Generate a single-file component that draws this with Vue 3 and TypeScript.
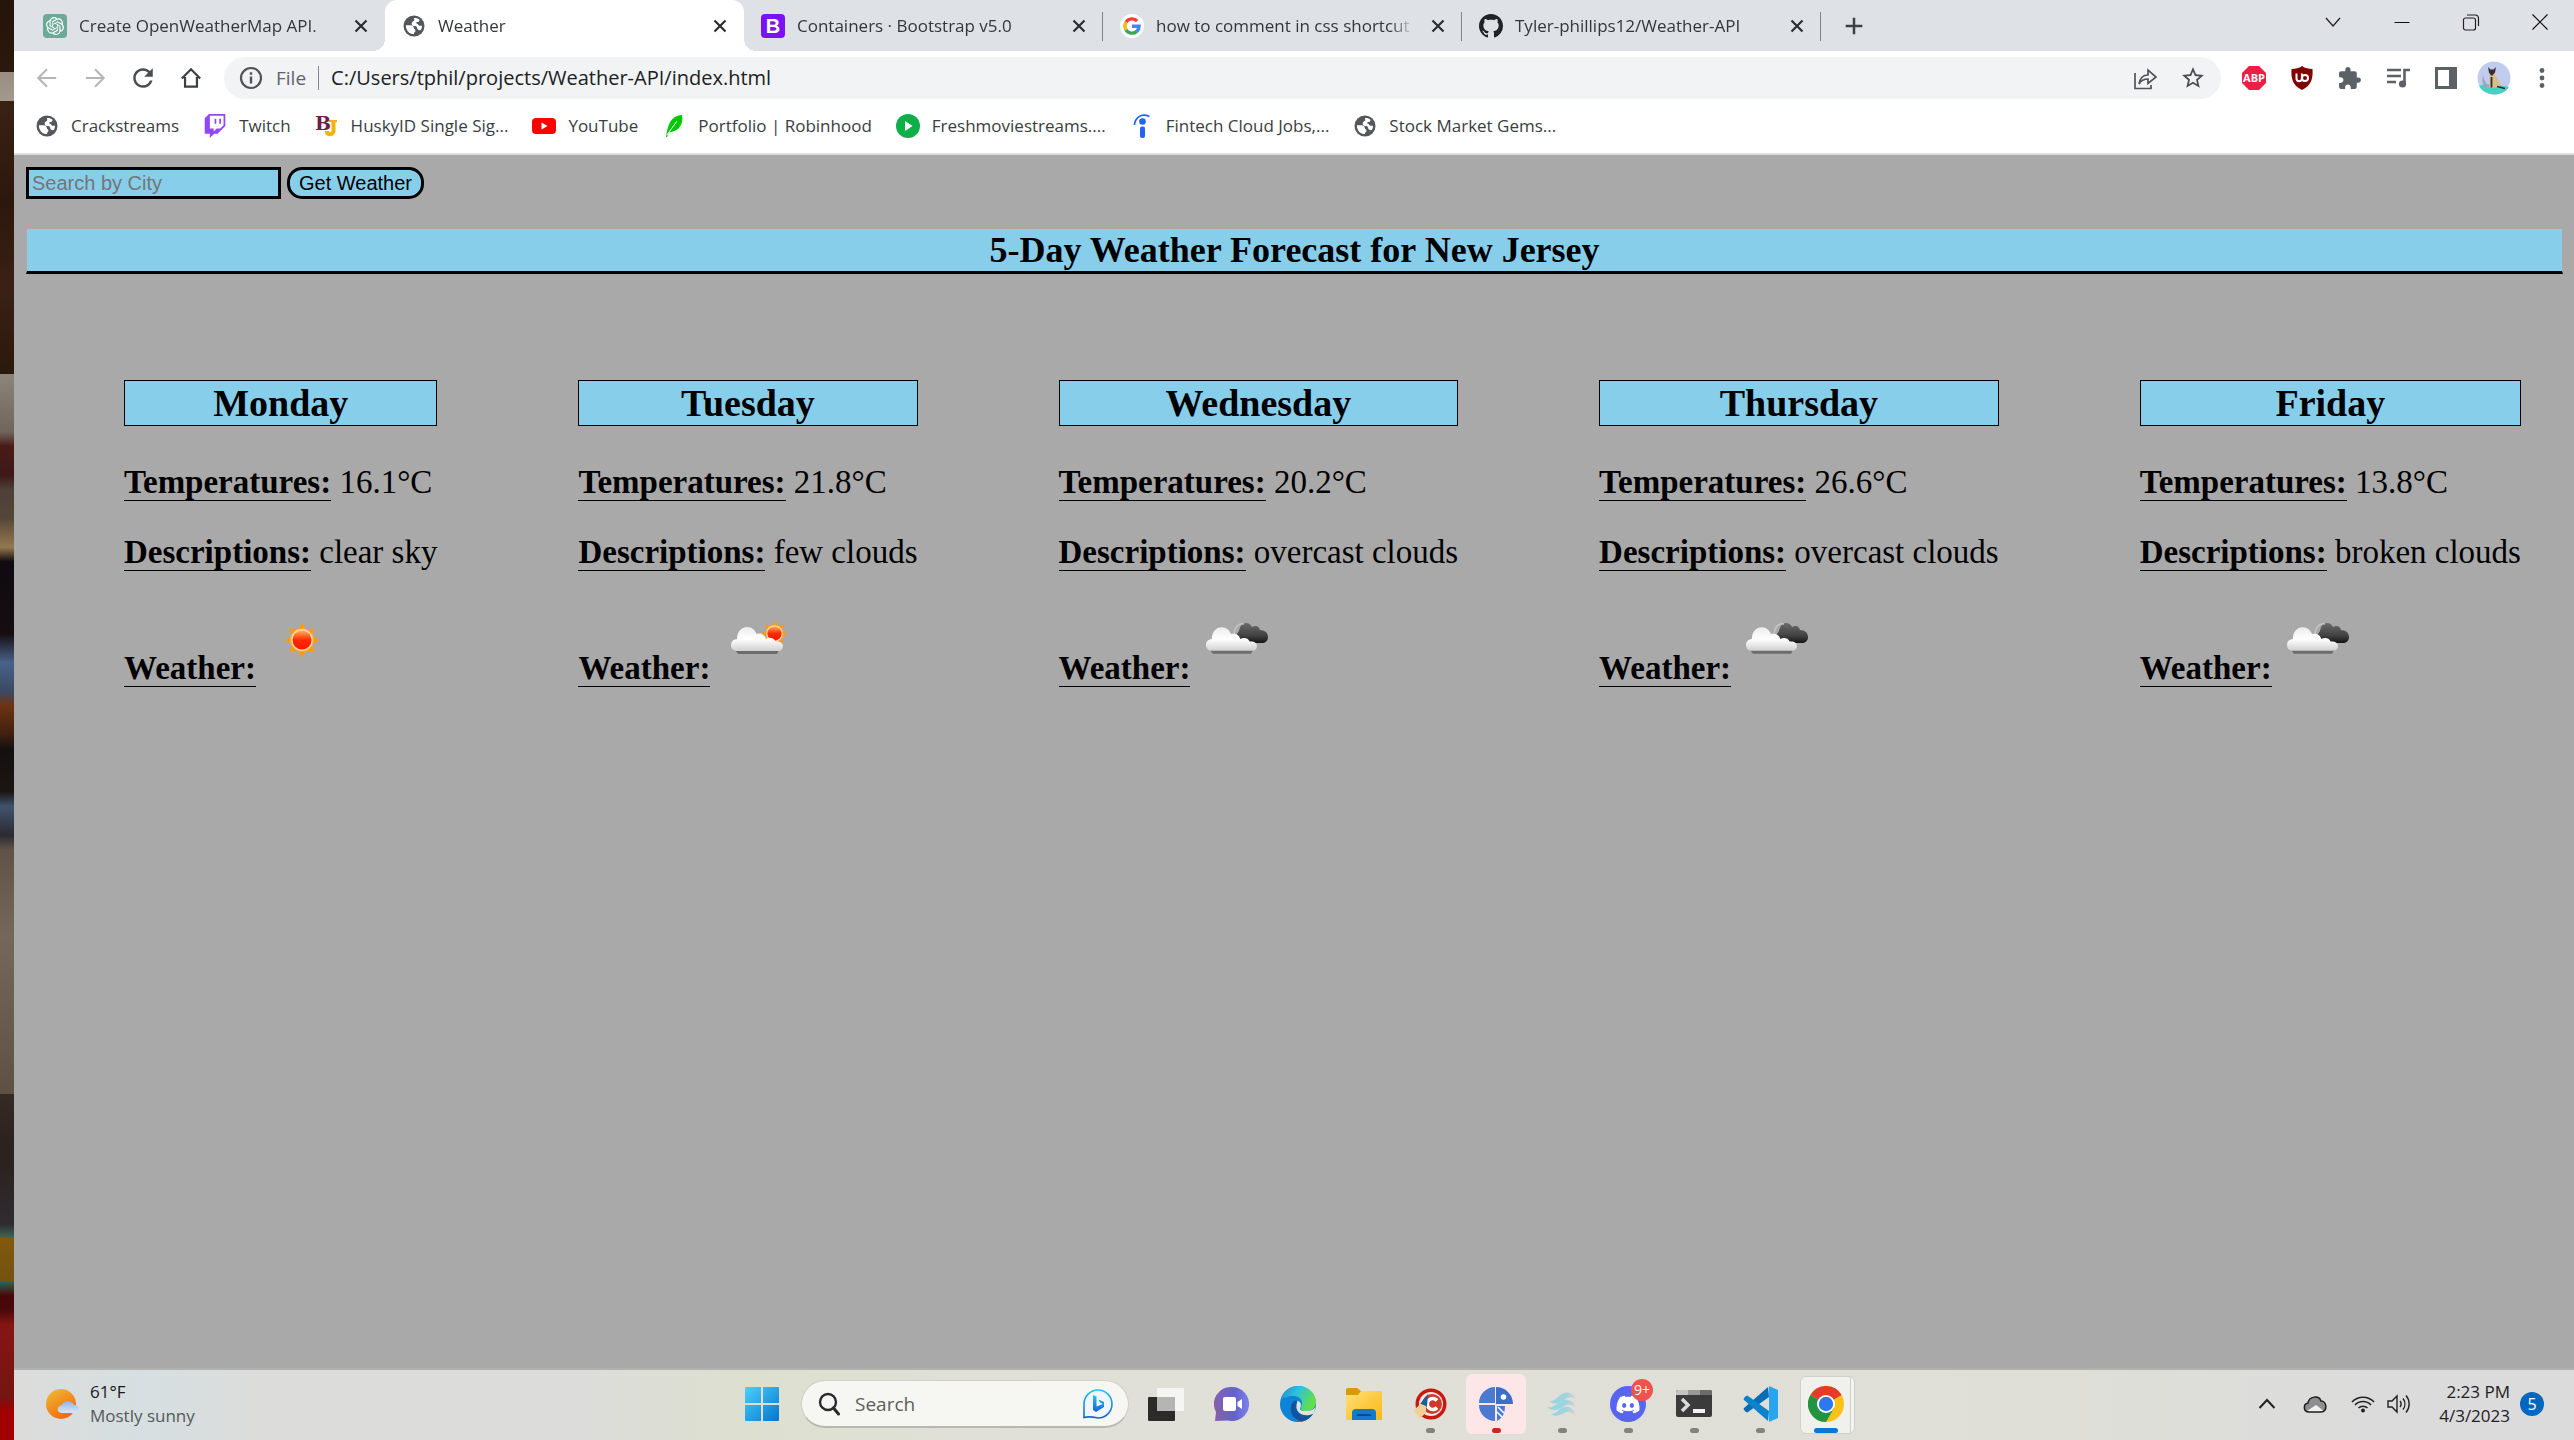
<script setup lang="ts">
import { ref } from 'vue'

interface Tab { icon: string; title: string; active?: boolean; divider?: boolean }
interface Bookmark { icon: string; label: string }
interface Day { name: string; temp: string; description: string; icon: string }
interface TaskApp { icon: string; label: string; running?: boolean; state?: 'alert' | 'open'; badge?: string }

const tabs: Tab[] = [
  { icon: 'chatgpt', title: 'Create OpenWeatherMap API.' },
  { icon: 'globe', title: 'Weather', active: true },
  { icon: 'bootstrap', title: 'Containers · Bootstrap v5.0', divider: true },
  { icon: 'google', title: 'how to comment in css shortcut - Google Search', divider: true },
  { icon: 'github', title: 'Tyler-phillips12/Weather-API', divider: true },
]

const bookmarks: Bookmark[] = [
  { icon: 'globe', label: 'Crackstreams' },
  { icon: 'twitch', label: 'Twitch' },
  { icon: 'husky', label: 'HuskyID Single Sig...' },
  { icon: 'youtube', label: 'YouTube' },
  { icon: 'feather', label: 'Portfolio | Robinhood' },
  { icon: 'play', label: 'Freshmoviestreams....' },
  { icon: 'indeed', label: 'Fintech Cloud Jobs,...' },
  { icon: 'globe', label: 'Stock Market Gems...' },
]

const extensions = [
  { icon: 'abp', label: 'Adblock Plus' },
  { icon: 'ublock', label: 'uBlock Origin' },
  { icon: 'puzzle', label: 'Extensions' },
  { icon: 'queue', label: 'Media controls' },
  { icon: 'panel', label: 'Side panel' },
  { icon: 'avatar', label: 'Profile' },
  { icon: 'dots', label: 'Menu' },
]

const windowControls = [
  { icon: 'win-down', label: 'Search tabs' },
  { icon: 'win-min', label: 'Minimize' },
  { icon: 'win-restore', label: 'Restore' },
  { icon: 'win-close', label: 'Close' },
]

const navButtons = [
  { icon: 'back', label: 'Back' },
  { icon: 'forward', label: 'Forward' },
  { icon: 'reload', label: 'Reload' },
  { icon: 'home', label: 'Home' },
]

const days: Day[] = [
  { name: 'Monday', temp: '16.1°C', description: 'clear sky', icon: 'sky-clear' },
  { name: 'Tuesday', temp: '21.8°C', description: 'few clouds', icon: 'sky-few' },
  { name: 'Wednesday', temp: '20.2°C', description: 'overcast clouds', icon: 'sky-overcast' },
  { name: 'Thursday', temp: '26.6°C', description: 'overcast clouds', icon: 'sky-overcast' },
  { name: 'Friday', temp: '13.8°C', description: 'broken clouds', icon: 'sky-overcast' },
]

const apps: TaskApp[] = [
  { icon: 'taskview', label: 'Task view' },
  { icon: 'chat', label: 'Chat' },
  { icon: 'edge', label: 'Edge' },
  { icon: 'explorer', label: 'File Explorer' },
  { icon: 'ccleaner', label: 'CCleaner', running: true },
  { icon: 'pie', label: 'Partition tool', running: true, state: 'alert' },
  { icon: 'wing', label: 'Wing', running: true },
  { icon: 'discord', label: 'Discord', running: true, badge: '9+' },
  { icon: 'terminal', label: 'Terminal', running: true },
  { icon: 'vscode', label: 'Visual Studio Code', running: true },
  { icon: 'chrome', label: 'Chrome', running: true, state: 'open' },
]

const url = ref('C:/Users/tphil/projects/Weather-API/index.html')
const city = ref('')
const query = ref('')
</script>

<template>
  <div class="desktop">
    <svg class="sprite" aria-hidden="true">
      <defs>
        <linearGradient id="g-sun" x1="0" y1="0" x2="0" y2="1">
          <stop offset="0" stop-color="#ffb060" /><stop offset=".5" stop-color="#ff2a00" /><stop offset="1" stop-color="#ff1400" />
        </linearGradient>
        <linearGradient id="g-cloud" x1="0" y1="0" x2="0" y2="1">
          <stop offset="0" stop-color="#ececec" /><stop offset=".5" stop-color="#ffffff" /><stop offset="1" stop-color="#d0d0d0" />
        </linearGradient>
        <linearGradient id="g-dark" x1="0" y1="0" x2="0" y2="1">
          <stop offset="0" stop-color="#6a6a6a" /><stop offset=".6" stop-color="#444" /><stop offset="1" stop-color="#151515" />
        </linearGradient>
        <linearGradient id="g-win" gradientUnits="userSpaceOnUse" x1="0" y1="0" x2="36" y2="36">
          <stop offset="0" stop-color="#4fd3fb" /><stop offset="1" stop-color="#0072d0" />
        </linearGradient>
        <linearGradient id="g-warm" x1="0" y1="0" x2=".6" y2="1">
          <stop offset="0" stop-color="#f0bf35" /><stop offset="1" stop-color="#f2690c" />
        </linearGradient>
        <linearGradient id="g-mini" x1="0" y1="0" x2="0" y2="1">
          <stop offset="0" stop-color="#8fb4ee" /><stop offset="1" stop-color="#dbe6fb" />
        </linearGradient>
        <linearGradient id="g-bing" x1="0" y1="0" x2="0" y2="1">
          <stop offset="0" stop-color="#21c3f3" /><stop offset="1" stop-color="#1c5fdc" />
        </linearGradient>
        <linearGradient id="g-chat" x1="0" y1=".3" x2="1" y2=".3">
          <stop offset="0" stop-color="#8660a8" /><stop offset=".6" stop-color="#6264cc" /><stop offset="1" stop-color="#7b83ea" />
        </linearGradient>
        <linearGradient id="g-edge" x1="0" y1="0" x2="1" y2=".4">
          <stop offset="0" stop-color="#1a8fdc" /><stop offset=".5" stop-color="#31c2d8" /><stop offset="1" stop-color="#62e04a" />
        </linearGradient>
        <linearGradient id="g-folder" x1="0" y1="0" x2="1" y2="1">
          <stop offset="0" stop-color="#ffe07a" /><stop offset="1" stop-color="#fab70e" />
        </linearGradient>
        <linearGradient id="g-wing" gradientUnits="userSpaceOnUse" x1="3" y1="0" x2="33" y2="0">
          <stop offset="0" stop-color="#93d6e4" /><stop offset=".6" stop-color="#9fd4df" /><stop offset="1" stop-color="#dccfd3" />
        </linearGradient>
      </defs>

      <!-- tab and bookmark icons -->
      <symbol id="chatgpt" viewBox="0 0 24 24">
        <rect width="24" height="24" rx="4" fill="#6ea896" />
        <path transform="translate(3 3) scale(.75)" fill="#fff" d="M22.2819 9.8211a5.9847 5.9847 0 0 0-.5157-4.9108 6.0462 6.0462 0 0 0-6.5098-2.9A6.0651 6.0651 0 0 0 4.9807 4.1818a5.9847 5.9847 0 0 0-3.9977 2.9 6.0462 6.0462 0 0 0 .7427 7.0966 5.98 5.98 0 0 0 .511 4.9107 6.051 6.051 0 0 0 6.5146 2.9001A5.9847 5.9847 0 0 0 13.2599 24a6.0557 6.0557 0 0 0 5.7718-4.2058 5.9894 5.9894 0 0 0 3.9977-2.9001 6.0557 6.0557 0 0 0-.7475-7.0729zm-9.022 12.6081a4.4755 4.4755 0 0 1-2.8764-1.0408l.1419-.0804 4.7783-2.7582a.7948.7948 0 0 0 .3927-.6813v-6.7369l2.02 1.1686a.071.071 0 0 1 .038.052v5.5826a4.504 4.504 0 0 1-4.4945 4.4944zm-9.6607-4.1254a4.4708 4.4708 0 0 1-.5346-3.0137l.142.0852 4.783 2.7582a.7712.7712 0 0 0 .7806 0l5.8428-3.3685v2.3324a.0804.0804 0 0 1-.0332.0615L9.74 19.9502a4.4992 4.4992 0 0 1-6.1408-1.6464zM2.3408 7.8956a4.485 4.485 0 0 1 2.3655-1.9728V11.6a.7664.7664 0 0 0 .3879.6765l5.8144 3.3543-2.0201 1.1685a.0757.0757 0 0 1-.071 0l-4.8303-2.7865A4.504 4.504 0 0 1 2.3408 7.872zm16.5963 3.8558L13.1038 8.364 15.1192 7.2a.0757.0757 0 0 1 .071 0l4.8303 2.7913a4.4944 4.4944 0 0 1-.6765 8.1042v-5.6772a.79.79 0 0 0-.407-.667zm2.0107-3.0231l-.142-.0852-4.7735-2.7818a.7759.7759 0 0 0-.7854 0L9.409 9.2297V6.8974a.0662.0662 0 0 1 .0284-.0615l4.8303-2.7866a4.4992 4.4992 0 0 1 6.6802 4.66zM8.3065 12.863l-2.02-1.1638a.0804.0804 0 0 1-.038-.0567V6.0742a4.4992 4.4992 0 0 1 7.3757-3.4537l-.142.0805L8.704 5.459a.7948.7948 0 0 0-.3927.6813zm1.0976-2.3654l2.602-1.4998 2.6069 1.4998v2.9994l-2.5974 1.4997-2.6067-1.4997Z" />
      </symbol>
      <symbol id="globe" viewBox="0 0 24 24">
        <circle cx="12" cy="12" r="10.5" fill="#54585d" />
        <path fill="#fff" d="M3.900 11.300h4.700c1.900 0 3.200 1.100 3.200 2.800 0 1.300 1.700 1.100 1.700 2.700 0 1.300-1.600 1.300-1.600 3.300-4.500 0-8.100-3.500-8-8.800zM12 4c2.300-.2 4.100.5 5.500 1.800.1 1.600-.9 2.300-2.400 2.300-1.300 0-1 1.500-.1 1.600 1.200.1 1.200 1.900 2.700 2h2.300c0 1.700-.4 3.100-1.300 4.400-2.300.3-3.600-.9-3.700-2.600-.1-1.300-1.500-1.300-2.900-1.500-1.800-.3-2.800-1.700-2.300-3.300.5-1.500 2.600-1.200 2.500-2.600 0-.8-.6-1.300-.3-2.100z" />
      </symbol>
      <symbol id="bootstrap" viewBox="0 0 24 24">
        <rect width="24" height="24" rx="4" fill="#7a12f5" />
      </symbol>
      <symbol id="google" viewBox="0 0 24 24">
        <circle cx="12" cy="12" r="12" fill="#fff" />
        <g fill="none" stroke-width="3.400">
          <path d="M6 8.200A7.200 7.200 0 0 1 17.200 7" stroke="#ea4335" />
          <path d="M6 15.800A7.200 7.200 0 0 1 6 8.200" stroke="#fbbc05" />
          <path d="M16.800 17.400A7.200 7.200 0 0 1 6 15.800" stroke="#34a853" />
          <path d="M12 12.200h7.100A7.200 7.200 0 0 1 16.800 17.400" stroke="#4285f4" />
        </g>
      </symbol>
      <symbol id="github" viewBox="0 0 16 16">
        <path fill="#1f2328" d="M8 0C3.580 0 0 3.580 0 8c0 3.540 2.290 6.530 5.470 7.590.4.070.55-.17.55-.38 0-.19-.01-.82-.01-1.490-2.010.37-2.530-.49-2.690-.94-.09-.23-.48-.94-.82-1.130-.28-.15-.68-.52-.01-.53.63-.01 1.080.58 1.230.82.72 1.210 1.870.87 2.330.66.07-.52.28-.87.51-1.070-1.780-.2-3.640-.89-3.640-3.950 0-.87.31-1.590.82-2.150-.08-.2-.36-1.020.08-2.120 0 0 .67-.21 2.200.82.64-.18 1.320-.27 2-.27s1.360.09 2 .27c1.530-1.040 2.200-.82 2.200-.82.44 1.100.16 1.920.08 2.120.51.56.82 1.270.82 2.150 0 3.070-1.870 3.750-3.650 3.950.29.25.54.73.54 1.480 0 1.070-.01 1.930-.01 2.200 0 .21.15.46.55.38A8.010 8.010 0 0 0 16 8c0-4.420-3.580-8-8-8z" />
      </symbol>
      <symbol id="twitch" viewBox="0 0 24 24">
        <path fill="#9146ff" d="M11.571 4.714h1.715v5.143H11.570zm4.715 0H18v5.143h-1.714zM6 0L1.714 4.286v15.428h5.143V24l4.286-4.286h3.428L22.286 12V0zm14.571 11.143l-3.428 3.428h-3.429l-3 3v-3H6.857V1.714h13.714Z" />
      </symbol>
      <symbol id="husky" viewBox="0 0 24 24">
        <path d="M18.500 7v10.500a4 4 0 0 1-7 1" fill="none" stroke="#f0b310" stroke-width="4" />
        <path d="M14 7h8M10 18h4" stroke="#f0b310" stroke-width="2" />
      </symbol>
      <symbol id="youtube" viewBox="0 0 24 24">
        <rect y="4" width="24" height="16" rx="4" fill="#f00" /><path d="M9.500 8.500v7l6-3.500z" fill="#fff" />
      </symbol>
      <symbol id="feather" viewBox="0 0 24 24">
        <path d="M4 23c1-6 2-13 6-17.500C13 2 17 1 20 1c1 5 0 10-4 14-3 2.500-6 2.500-9 3.500L5 23z" fill="#00c805" />
        <path d="M5 21 15 7" stroke="#fff" stroke-width="1" />
      </symbol>
      <symbol id="play" viewBox="0 0 24 24">
        <circle cx="12" cy="12" r="12" fill="#0caf48" /><path d="M9 7v10l7.500-5z" fill="#fff" />
      </symbol>
      <symbol id="indeed" viewBox="0 0 24 24">
        <circle cx="12.500" cy="7.500" r="3.300" fill="#2164f3" /><rect x="10" y="12.500" width="5" height="11.500" rx="2" fill="#2164f3" />
        <path d="M4.500 11C5 4 11-1.500 19.500 2.500" fill="none" stroke="#2164f3" stroke-width="1.800" />
      </symbol>

      <!-- toolbar icons -->
      <symbol id="close" viewBox="0 0 24 24"><path d="m6 6 12 12M18 6 6 18" stroke="#2a2d31" stroke-width="2.400" /></symbol>
      <symbol id="plus" viewBox="0 0 24 24"><path d="M12 2v20M2 12h20" stroke="#3c4043" stroke-width="3" /></symbol>
      <symbol id="back" viewBox="0 0 24 24"><path d="M22 12H3M12 2.500 2.500 12l9.500 9.500" fill="none" stroke="#b3b5b8" stroke-width="2.200" /></symbol>
      <symbol id="forward" viewBox="0 0 24 24"><path d="M2 12h19M12 2.500l9.500 9.500-9.500 9.500" fill="none" stroke="#b3b5b8" stroke-width="2.200" /></symbol>
      <symbol id="reload" viewBox="3 3 18 18"><path fill="#4a4d51" d="M17.650 6.350C16.200 4.900 14.210 4 12 4c-4.420 0-7.990 3.580-7.990 8s3.570 8 7.990 8c3.730 0 6.840-2.550 7.730-6h-2.080c-.82 2.330-3.040 4-5.650 4-3.310 0-6-2.690-6-6s2.690-6 6-6c1.660 0 3.140.69 4.220 1.780L13 11h7V4l-2.350 2.350z" /></symbol>
      <symbol id="home" viewBox="0 0 24 24"><path d="M2 12.500 12 2.500l10 10M5.500 11v10.500h13V11" fill="none" stroke="#3c4043" stroke-width="2.400" /></symbol>
      <symbol id="info" viewBox="0 0 24 24"><circle cx="12" cy="12" r="10" fill="none" stroke="#50545a" stroke-width="2.200" /><path d="M12 10.500v7M12 6.300v2.500" stroke="#50545a" stroke-width="2.400" /></symbol>
      <symbol id="share" viewBox="0 0 24 24"><path d="M2 7v15.500h16V19M6 18c1-6 4-9 9-9V4l8 7-8 6.500V13c-4 0-7 1.500-9 5z" fill="none" stroke="#50545a" stroke-width="1.700" /></symbol>
      <symbol id="star" viewBox="1 1 22 22"><path fill="#4a4d51" d="M22 9.240l-7.190-.62L12 2 9.190 8.630 2 9.240l5.460 4.730L5.820 21 12 17.270 18.180 21l-1.630-7.030L22 9.240zM12 15.400l-3.760 2.270 1-4.280-3.320-2.880 4.380-.38L12 6.100l1.710 4.040 4.380.38-3.320 2.880 1 4.280L12 15.400z" /></symbol>
      <symbol id="abp" viewBox="0 0 24 24"><path d="M7 0h10l7 7v10l-7 7H7l-7-7V7z" fill="#ed1e45" /></symbol>
      <symbol id="ublock" viewBox="0 0 24 24">
        <path d="M12 0c3 2.200 6.500 3 10.500 3 .5 9-.5 16-10.500 21C2 19 1 12 1.500 3 5.500 3 9 2.200 12 0z" fill="#800000" />
        <path d="M6.500 7.500v5a2.700 2.700 0 0 0 5.400 0v-5" fill="none" stroke="#fff" stroke-width="2" /><circle cx="15" cy="12" r="3" fill="none" stroke="#fff" stroke-width="2" />
      </symbol>
      <symbol id="puzzle" viewBox="1 0 23 23"><path fill="#5c6166" d="M20.500 11H19V7c0-1.100-.9-2-2-2h-4V3.500C13 2.120 11.880 1 10.500 1S8 2.120 8 3.500V5H4c-1.100 0-1.990.9-1.990 2v3.800H3.500c1.490 0 2.700 1.210 2.700 2.700s-1.210 2.700-2.700 2.700H2V20c0 1.100.9 2 2 2h3.800v-1.500c0-1.490 1.210-2.700 2.700-2.700 1.490 0 2.700 1.210 2.700 2.700V22H17c1.100 0 2-.9 2-2v-4h1.500c1.380 0 2.500-1.120 2.500-2.500S21.880 11 20.500 11z" /></symbol>
      <symbol id="queue" viewBox="0 0 24 24"><path d="M1 4h14M1 10h14M1 16h9" stroke="#5c6166" stroke-width="2.400" /><path d="M18.500 18V4H24" fill="none" stroke="#5c6166" stroke-width="2.600" /><circle cx="16.500" cy="18" r="3.600" fill="#5c6166" /></symbol>
      <symbol id="panel" viewBox="0 0 24 24"><path fill="#5c6166" fill-rule="evenodd" d="M1 1h22v22H1zm3 3v16h11V4z" /></symbol>
      <symbol id="avatar" viewBox="0 0 34 34">
        <circle cx="17" cy="17" r="16.500" fill="#c0cdef" />
        <path d="M2 24.500c10-2 20-1 30 1.500-3 5-9 7.500-15 7.500S4 30 2 24.500z" fill="#48d1c2" />
        <path d="M6 14c1 6 4 10 8 12H8c-3-3-3-8-2-12z" fill="#9ba5bd" />
        <path d="M12 26.500c1-5 0-9 1-14h4c2 5 6 6 6 10v4z" fill="#d9bd8d" />
        <path d="M11 6l2.500 2.500h3L19 6l-1 5.500-2.500 3h-1.500l-2-3z" fill="#3b2c25" /><path d="M14.500 16v10.500M20 25.500l8 2" stroke="#3b2c25" stroke-width="1.800" />
      </symbol>
      <symbol id="dots" viewBox="0 0 24 24"><g fill="#5c6166"><circle cx="12" cy="4.500" r="2.400" /><circle cx="12" cy="12" r="2.400" /><circle cx="12" cy="19.500" r="2.400" /></g></symbol>
      <symbol id="win-down" viewBox="0 0 24 24"><path d="m5 8 7 8 7-8" fill="none" stroke="#222" stroke-width="1.300" /></symbol>
      <symbol id="win-min" viewBox="0 0 24 24"><path d="M4.500 12.500h15" stroke="#111" /></symbol>
      <symbol id="win-restore" viewBox="0 0 24 24"><rect x="4.500" y="8" width="12" height="12" rx="2" fill="none" stroke="#222" stroke-width="1.200" /><path d="M8 5h8a3.500 3.500 0 0 1 3.500 3.500V16" fill="none" stroke="#222" stroke-width="1.200" /></symbol>
      <symbol id="win-close" viewBox="0 0 24 24"><path d="m4.500 4.500 15 15m0-15-15 15" stroke="#111" stroke-width="1.200" /></symbol>

      <!-- forecast pictures -->
      <symbol id="rays" viewBox="-18 -18 36 36">
        <g fill="#ff9a0a">
          <path d="M-3.500-11 0-17.500 3.500-11zM-3.500 11 0 17.500 3.500 11zM-11-3.500-17.500 0-11 3.500zM11-3.500 17.500 0 11 3.500z" />
          <path transform="rotate(45)" d="M-3.500-11 0-17.500 3.500-11zM-3.500 11 0 17.500 3.500 11zM-11-3.500-17.500 0-11 3.500zM11-3.500 17.500 0 11 3.500z" />
        </g>
        <circle r="11.500" fill="#ffd9a0" stroke="#ffa52e" /><circle r="9.500" fill="url(#g-sun)" />
      </symbol>
      <symbol id="sky-clear" viewBox="0 0 75 75"><use href="#rays" x="20" y="18" width="36" height="36" /></symbol>
      <symbol id="white-cloud" viewBox="0 0 52 28">
        <path d="M4 24h44l-2 4H7z" fill="#6c6c6c" />
        <path d="M7 25C2 25 0 22.500 0 19 0 16 2 13.500 6 13 6 6 10 1 16 1c5 0 8 3 9.500 7 3-1 8-.5 9.500 5 3-2 8-1.500 9.500 2.500C49 15 52 17 52 20c0 3-2 5-5 5z" fill="url(#g-cloud)" />
      </symbol>
      <symbol id="sky-few" viewBox="0 0 75 75">
        <use href="#rays" x="42" y="16" width="27" height="27" /><use href="#white-cloud" x="12" y="22" width="52" height="28" />
      </symbol>
      <symbol id="sky-overcast" viewBox="0 0 75 75">
        <path d="M38 39c-4-5 0-9 2-12 1-5 3-8 7-8 3 0 5 2 6 4 4-2 7-1 8 3 5 0 8 3 8 7s-3 6-6 6z" fill="url(#g-dark)" />
        <path d="M35 30c1-8 5-11 10-10" fill="none" stroke="#c4c4c4" stroke-width="1.500" />
        <use href="#white-cloud" x="7" y="22" width="51" height="28" />
      </symbol>

      <!-- taskbar icons -->
      <symbol id="mostly-sunny" viewBox="0 0 36 36">
        <circle cx="15" cy="18" r="15" fill="url(#g-warm)" />
        <path d="M17 27c-7 0-7-7-1-8 1-5 10-5 12 0 7 0 7 8 0 8z" fill="url(#g-mini)" />
      </symbol>
      <symbol id="windows" viewBox="0 0 36 36"><path fill="url(#g-win)" d="M2 1h15v16H1V2a1 1 0 0 1 1-1zm17 0h15a1 1 0 0 1 1 1v15H19zM1 19h16v16H2a1 1 0 0 1-1-1zm18 0h16v15a1 1 0 0 1-1 1H19z" /></symbol>
      <symbol id="magnifier" viewBox="0 0 24 24"><circle cx="11" cy="10" r="8" fill="none" stroke="#2b2b2b" stroke-width="2.400" /><path d="m16.500 16 5 6" stroke="#2b2b2b" stroke-width="3" stroke-linecap="round" /></symbol>
      <symbol id="bing" viewBox="0 0 32 32">
        <path d="M2 29V16A14 14 0 1 1 16 30c-5-1-9-2-14-.5z" fill="#eff6fd" stroke="url(#g-bing)" stroke-width="1.600" />
        <path d="M11 7l3.500 1.500v10L21 16l-3-1.500-1.500-3L22 14v5l-8 5-3-2z" fill="url(#g-bing)" />
      </symbol>
      <symbol id="taskview" viewBox="0 0 36 36"><rect y="11" width="27" height="24" rx="1" fill="#2b2b29" /><rect x="9" y="2" width="27" height="23" rx="1" fill="#f7f7f7" opacity=".9" /><path d="M9 11h18v14H9z" fill="#b5b5b4" /></symbol>
      <symbol id="chat" viewBox="0 0 36 36">
        <path d="M18 1a17 17 0 1 1-4 33.500L1 35l1-9A17 17 0 0 1 18 1z" fill="url(#g-chat)" />
        <rect x="9" y="11" width="13" height="14" rx="2" fill="#fff" /><path d="m23.500 16 4.500-3v10l-4.500-3z" fill="#fff" />
      </symbol>
      <symbol id="edge" viewBox="0 0 36 36">
        <circle cx="18" cy="18" r="18" fill="#0d84d8" />
        <path d="M1 13C4 4 11 0 18 0c10 0 18 7 18 16 0 7-6 9-10 9-5 0-6-2-5-4 3-5 0-11-8-11C8 10 3 12 1 13z" fill="url(#g-edge)" />
        <path d="M14 15c-6 5-4 18 8 20.500 5-1 9-4 11-8-8 4-17 1-17-7 0-3 2-5 3-5-1-1-3-1-5-.5z" fill="#12539e" />
        <path d="M17 15c3 0 5 3 3.500 6-1 2-1 4 5 4 4 0 8-1 10-4-1 3-1 5-2 6.500-7 4-17 1-17-7 0-3 1-4 .5-5.500z" fill="#e3e3dc" />
      </symbol>
      <symbol id="explorer" viewBox="0 0 36 36">
        <path d="M0 4a2 2 0 0 1 2-2h9l4 3v6H0z" fill="#d89b06" /><path d="M0 9h12l3-4h19a2 2 0 0 1 2 2v27H0z" fill="url(#g-folder)" />
        <path d="M6 34V27a4 4 0 0 1 4-4h16a4 4 0 0 1 4 4v7z" fill="#1279cc" /><path d="M11 29h14" stroke="#074a80" stroke-width="2" />
      </symbol>
      <symbol id="ccleaner" viewBox="0 0 36 36">
        <circle cx="19" cy="18" r="15.500" fill="#c9180f" /><circle cx="19" cy="18" r="12" fill="#f3e9e4" /><circle cx="20" cy="18" r="10" fill="#d0382c" />
        <path d="M25 14.500a5.500 5.500 0 1 0 0 7" fill="none" stroke="#fff" stroke-width="3.600" />
        <path d="m16 8-8 10 7 3z" fill="#1b5f9c" /><path d="M9 18c-4 2-6 5-7 8l6 6 6-5 0-7z" fill="#f3cf98" />
      </symbol>
      <symbol id="pie" viewBox="0 0 36 36">
        <path d="M17 1v16H1A16 16 0 0 1 17 1zM1 19h16v16A16 16 0 0 1 1 19z" fill="#4a7bd0" />
        <path d="M18 1a17 17 0 0 1 17 17H18z" fill="#3c70c8" /><circle cx="25.500" cy="11" r="2.800" fill="#fff" />
        <path d="M19 20h8c0 6-2 12-8 15z" fill="#4a7bd0" /><path d="m20 21 6 6m-7-1 5 5" stroke="#fff" stroke-width="1.500" />
      </symbol>
      <symbol id="wing" viewBox="0 0 36 36">
        <g fill="url(#g-wing)">
          <path d="M5 15c5 1 8-4 13-7 6-3 11-1 14 5-5-3-8-2-12 1-5 4-10 5-15 1z" />
          <path d="M3 21c6 2 9-3 14-6 6-3 12-1 15 6-5-3-9-3-13 0-6 4-11 4-16 0z" />
          <path d="M7 28c5 0 7-4 11-6 6-3 11-1 14 8-5-5-8-5-12-3-5 3-9 4-13 1z" />
        </g>
      </symbol>
      <symbol id="discord" viewBox="0 0 36 36">
        <circle cx="18" cy="18" r="18" fill="#5865f2" />
        <path transform="translate(6.500 7) scale(.96)" fill="#fff" d="M20.317 4.3698a19.7913 19.7913 0 00-4.8851-1.5152.0741.0741 0 00-.0785.0371c-.211.3753-.4447.8648-.6083 1.2495-1.8447-.2762-3.68-.2762-5.4868 0-.1636-.3933-.4058-.8742-.6177-1.2495a.077.077 0 00-.0785-.037 19.7363 19.7363 0 00-4.8852 1.515.0699.0699 0 00-.0321.0277C.5334 9.0458-.319 13.5799.0992 18.0578a.0824.0824 0 00.0312.0561c2.0528 1.5076 4.0413 2.4228 5.9929 3.0294a.0777.0777 0 00.0842-.0276c.4616-.6304.8731-1.2952 1.226-1.9942a.076.076 0 00-.0416-.1057c-.6528-.2476-1.2743-.5495-1.8722-.8923a.077.077 0 01-.0076-.1277c.1258-.0943.2517-.1923.3718-.2914a.0743.0743 0 01.0776-.0105c3.9278 1.7933 8.18 1.7933 12.0614 0a.0739.0739 0 01.0785.0095c.1202.099.246.1981.3728.2924a.077.077 0 01-.0066.1276 12.2986 12.2986 0 01-1.873.8914.0766.0766 0 00-.0407.1067c.3604.698.7719 1.3628 1.225 1.9932a.076.076 0 00.0842.0286c1.961-.6067 3.9495-1.5219 6.0023-3.0294a.077.077 0 00.0313-.0552c.5004-5.177-.8382-9.6739-3.5485-13.6604a.061.061 0 00-.0312-.0286zM8.020 15.3312c-1.1825 0-2.1569-1.0857-2.1569-2.419 0-1.3332.9555-2.4189 2.157-2.4189 1.2108 0 2.1757 1.0952 2.1568 2.419 0 1.3332-.9555 2.4189-2.1569 2.4189zm7.9748 0c-1.1825 0-2.1569-1.0857-2.1569-2.419 0-1.3332.9554-2.4189 2.1569-2.4189 1.2108 0 2.1757 1.0952 2.1568 2.419 0 1.3332-.946 2.4189-2.1568 2.4189Z" />
      </symbol>
      <symbol id="terminal" viewBox="0 0 36 36">
        <rect y="4" width="36" height="27" rx="2" fill="#3b3b3b" /><path d="M2 4h10v5H0V6a2 2 0 0 1 2-2z" fill="#c4c4c4" /><path d="M12 4h12v5H12z" fill="#999" /><path d="M24 4h10a2 2 0 0 1 2 2v3H24z" fill="#6b6b6b" />
        <path d="m6 13 6 6-6 6" fill="none" stroke="#dadada" stroke-width="3.500" /><path d="M17 25h12" stroke="#f2f2f2" stroke-width="4" />
      </symbol>
      <symbol id="vscode" viewBox="0 0 36 36">
        <path d="m26 1-24 21a1.500 1.500 0 0 0 0 2l2 2a1.500 1.500 0 0 0 2 0L27 11z" fill="#0a6cb5" />
        <path d="M26 35 2 14a1.500 1.500 0 0 1 0-2l2-2a1.500 1.500 0 0 1 2 0l21 15z" fill="#0b83cc" />
        <path d="M27 0 36 4v28l-9 4z" fill="#27a5f0" />
      </symbol>
      <symbol id="chrome" viewBox="0 0 36 36">
        <circle cx="18" cy="18" r="18" fill="#fbc116" />
        <path d="M18 18 2.400 9A18 18 0 0 1 33.600 9z" fill="#e33b2e" />
        <path d="M18 18 2.400 9A18 18 0 0 0 18 36l7.800-13.500z" fill="#229342" />
        <circle cx="18" cy="18" r="9" fill="#fff" /><circle cx="18" cy="18" r="7.200" fill="#2b79ed" />
      </symbol>
      <symbol id="tray-up" viewBox="0 0 24 24"><path d="m4.500 16 7.500-8 7.500 8" fill="none" stroke="#222" stroke-width="2" /></symbol>
      <symbol id="tray-cloud" viewBox="0 0 24 24">
        <path d="M6 20c-6 0-6-8-1-9 1-7 11-8 13-2 6 0 7 11 0 11z" fill="#8e8e8e" /><path d="m4 19 9-6 8 6-2 1H6z" fill="#f0f0f0" />
        <path d="M6 20c-6 0-6-8-1-9 1-7 11-8 13-2 6 0 7 11 0 11z" fill="none" stroke="#1d1d1d" stroke-width="1.500" />
      </symbol>
      <symbol id="tray-wifi" viewBox="0 0 24 24"><g fill="none" stroke="#222" stroke-width="1.600"><path d="M1 10a15 15 0 0 1 22 0M4 13a11 11 0 0 1 16 0M7.500 16a6.500 6.500 0 0 1 9 0" /></g><circle cx="12" cy="18.500" r="2" fill="#222" /></symbol>
      <symbol id="tray-sound" viewBox="0 0 24 24"><path d="M1 9h4l5-5v16l-5-5H1zM13 9a5 5 0 0 1 0 6M16 6.500a9 9 0 0 1 0 11M19 3.500a13 13 0 0 1 0 17" fill="none" stroke="#222" stroke-width="1.400" /></symbol>
    </svg>

    <div class="wallpaper"></div>

    <div class="screen">
      <header class="chrome">
        <div class="tab-strip">
          <div v-for="tab in tabs" :key="tab.title" class="tab" :class="{ active: tab.active, divider: tab.divider }">
            <svg class="favicon" viewBox="0 0 24 24">
              <use :href="'#' + tab.icon" />
              <text v-if="tab.icon === 'bootstrap'" class="letter-bootstrap" x="12" y="19">B</text>
            </svg>
            <button class="tab-title" type="button">{{ tab.title }}</button>
            <button class="icon-button tab-close" type="button" :aria-label="'Close ' + tab.title"><svg><use href="#close" /></svg></button>
          </div>
          <button class="icon-button new-tab" type="button" aria-label="New tab"><svg><use href="#plus" /></svg></button>
          <div class="window-controls">
            <button v-for="control in windowControls" :key="control.icon" class="icon-button" type="button" :aria-label="control.label">
              <svg><use :href="'#' + control.icon" /></svg>
            </button>
          </div>
        </div>

        <div class="toolbar">
          <div class="nav">
            <button v-for="nav in navButtons" :key="nav.icon" class="icon-button" type="button" :aria-label="nav.label">
              <svg><use :href="'#' + nav.icon" /></svg>
            </button>
          </div>
          <div class="omnibox">
            <svg class="small-icon"><use href="#info" /></svg>
            <label class="scheme" for="url">File</label>
            <input id="url" v-model="url" type="text" spellcheck="false">
            <button class="icon-button" type="button" aria-label="Share"><svg><use href="#share" /></svg></button>
            <button class="icon-button" type="button" aria-label="Bookmark"><svg><use href="#star" /></svg></button>
          </div>
          <div class="extensions">
            <button v-for="ext in extensions" :key="ext.icon" class="icon-button" :class="ext.icon" type="button" :aria-label="ext.label">
              <svg>
                <use :href="'#' + ext.icon" />
                <text v-if="ext.icon === 'abp'" class="letter-abp" x="12" y="16">ABP</text>
              </svg>
            </button>
          </div>
        </div>

        <nav class="bookmarks">
          <a v-for="mark in bookmarks" :key="mark.label" href="#">
            <svg class="favicon" viewBox="0 0 24 24">
              <use :href="'#' + mark.icon" />
              <text v-if="mark.icon === 'husky'" class="letter-husky" x="8" y="16">B</text>
            </svg>{{ mark.label }}
          </a>
        </nav>
      </header>

      <main class="page">
        <form class="search" @submit.prevent>
          <input v-model="city" type="text" placeholder="Search by City" aria-label="Search by City">
          <button type="submit">Get Weather</button>
        </form>
        <h1>5-Day Weather Forecast for New Jersey</h1>
        <div class="forecast">
          <section v-for="day in days" :key="day.name" class="day">
            <h2>{{ day.name }}</h2>
            <p><b>Temperatures:</b> {{ day.temp }}</p>
            <p><b>Descriptions:</b> {{ day.description }}</p>
            <p><b>Weather:</b> <svg class="sky" role="img" :aria-label="day.description"><use :href="'#' + day.icon" /></svg></p>
          </section>
        </div>
      </main>

      <footer class="taskbar">
        <button class="widget" type="button">
          <svg><use href="#mostly-sunny" /></svg>
          <span><span class="degrees">61°F</span><br>Mostly sunny</span>
        </button>

        <div class="apps">
          <button class="app" type="button" aria-label="Start"><svg><use href="#windows" /></svg></button>
          <div class="task-search">
            <svg class="small-icon"><use href="#magnifier" /></svg>
            <input v-model="query" type="text" placeholder="Search" aria-label="Search">
            <svg class="bing"><use href="#bing" /></svg>
          </div>
          <button v-for="app in apps" :key="app.icon" class="app" :class="[app.state, { running: app.running }]" type="button" :aria-label="app.label">
            <svg><use :href="'#' + app.icon" /></svg>
            <span v-if="app.badge" class="badge">{{ app.badge }}</span>
          </button>
        </div>

        <div class="tray">
          <button class="icon-button" type="button" aria-label="Hidden icons"><svg><use href="#tray-up" /></svg></button>
          <button class="icon-button" type="button" aria-label="OneDrive"><svg><use href="#tray-cloud" /></svg></button>
          <button class="icon-button network" type="button" aria-label="Network"><svg><use href="#tray-wifi" /></svg><svg><use href="#tray-sound" /></svg></button>
          <button class="clock" type="button">2:23 PM<br>4/3/2023</button>
          <span class="count">5</span>
        </div>
      </footer>
    </div>
  </div>
</template>

<style>
body {
  background: #a9a9a9;
}
</style>

<style scoped>
.desktop {
  display: flex;
  min-height: 100vh;
  font-family: "Open Sans", sans-serif;
  font-size: 17px;
  line-height: 24px;
  color: #202124;
}

.sprite {
  position: absolute;
  width: 0;
  height: 0;
}

button,
input {
  margin: 0;
  padding: 0;
  border: 0;
  background: none;
  color: inherit;
  font: inherit;
}

svg {
  display: block;
  flex: none;
  width: 24px;
  height: 24px;
}

text {
  font-weight: 700;
  text-anchor: middle;
}

.letter-bootstrap {
  fill: #fff;
  font-family: "Liberation Sans", sans-serif;
  font-size: 20px;
}

.letter-husky {
  fill: #6f1d46;
  font-family: "DejaVu Serif", serif;
  font-size: 19px;
}

.letter-abp {
  fill: #fff;
  font-size: 11px;
}

/* desktop picture that shows beside the window */
.wallpaper {
  flex: none;
  width: 14px;
  background: linear-gradient(
    #24140a 0, #2c180c 5%, #988d80 5%, #a3998c 7%, #3a2213 7%, #2b180c 14%, #3a2113 20%, #2a190b 26%,
    #8d8579 26%, #6f655b 30%, #4a1a17 31%, #3d1917 33%, #4c4038 34%, #554637 36%, #94794f 38%, #0f0b10 39%,
    #150d10 44%, #48628a 46%, #3a4a63 48%, #6d3312 49%, #40200f 51%, #14100f 52%, #1c1613 55%, #40536c 56%,
    #2c2a32 58%, #5e5346 59%, #75685a 65%, #5e5144 76%, #362a24 76%, #2b211d 80%, #2f2b2f 85%, #3c6a5c 86%,
    #80590c 86%, #74530f 89%, #2f6350 89%, #480606 90%, #4a0a0a 91%, #861513 92%, #751512 97%, #a00000 98%, #a00000
  );
}

.screen {
  display: flex;
  flex: 1;
  flex-direction: column;
  min-width: 0;
}

.chrome {
  border-bottom: 2px solid #dcdddf;
  background: #fff;
}

.icon-button {
  display: flex;
  flex: none;
  align-items: center;
  justify-content: center;
}

.tab-strip {
  display: flex;
  height: 51px;
  padding-left: 12px;
  background: #dee1e6;
}

.tab {
  position: relative;
  display: flex;
  flex: 0 1 359px;
  align-items: center;
  gap: 12px;
  min-width: 0;
  box-sizing: border-box;
  padding: 0 12px 0 17px;
}

.tab.active {
  border-radius: 12px 12px 0 0;
  background: #fff;
}

/* feet of the active tab, curving into the toolbar */
.tab.active::before,
.tab.active::after {
  position: absolute;
  bottom: 0;
  width: 12px;
  height: 12px;
  content: "";
}

.tab.active::before {
  right: 100%;
  background: radial-gradient(circle at 0 0, transparent 12px, #fff 12px);
}

.tab.active::after {
  left: 100%;
  background: radial-gradient(circle at 100% 0, transparent 12px, #fff 12px);
}

.tab.divider::after {
  position: absolute;
  right: 0;
  top: 12px;
  width: 1px;
  height: 29px;
  background: #808387;
  content: "";
}

.tab-title {
  flex: 1;
  min-width: 0;
  overflow: hidden;
  color: #33363b;
  text-align: left;
  white-space: nowrap;
  mask-image: linear-gradient(90deg, #000 calc(100% - 24px), transparent);
}

.tab-close {
  width: 24px;
}

.tab-close svg {
  width: 22px;
  height: 22px;
}

.new-tab {
  width: 66px;
}

.new-tab svg {
  width: 20px;
  height: 20px;
}

.window-controls {
  display: flex;
  height: 43px;
  margin-left: auto;
}

.window-controls .icon-button {
  width: 69px;
}

.toolbar {
  display: flex;
  align-items: center;
  height: 54px;
  padding: 0 8px 0 9px;
}

.nav,
.extensions {
  display: flex;
}

.nav .icon-button,
.extensions .icon-button {
  width: 48px;
  height: 42px;
}

.nav svg {
  width: 22px;
  height: 22px;
}

.nav {
  margin-right: 9px;
}

.omnibox {
  display: flex;
  flex: 1;
  align-items: center;
  height: 42px;
  padding: 0 4px 0 15px;
  border-radius: 21px;
  background: #f1f3f4;
  font-size: 19px;
}

.omnibox .icon-button {
  width: 48px;
  height: 42px;
}

.scheme {
  margin: 0 12px 0 13px;
  padding-right: 12px;
  border-right: 1px solid #80868b;
  color: #5f6368;
}

.omnibox input {
  flex: 1;
  min-width: 0;
  font-size: 20px;
}

.extensions {
  margin-left: 9px;
}

.extensions .avatar svg {
  width: 34px;
  height: 34px;
}

.bookmarks {
  display: flex;
  gap: 24px;
  height: 48px;
  padding: 9px 21px 0;
  box-sizing: border-box;
}

.bookmarks a {
  display: flex;
  gap: 12px;
  height: 24px;
  align-items: center;
  color: #3a3d41;
  text-decoration: none;
  white-space: nowrap;
}

.page {
  flex: 1;
  padding: 12px 11px 0 12px;
  background: #a9a9a9;
  color: #000;
  font-family: "Liberation Serif", serif;
}

.search {
  display: flex;
  gap: 6px;
  height: 32px;
  font-family: "Liberation Sans", sans-serif;
  font-size: 20px;
}

.search input {
  width: 255px;
  box-sizing: border-box;
  padding: 0 3px;
  border: 3px solid #000;
  background: #87ceeb;
}

.search input::placeholder {
  color: #757575;
}

.search button {
  padding: 0 9px;
  border: 3px solid #000;
  border-radius: 15px;
  background: #87ceeb;
}

h1 {
  margin: 29px 0 0;
  border: 1px solid #b5a69e;
  border-bottom: 3px solid #000;
  background: #87ceeb;
  font-size: 36px;
  line-height: 42px;
  text-align: center;
}

.forecast {
  display: flex;
  justify-content: space-between;
  margin-top: 106px;
  padding: 0 42px 0 98px;
  font-size: 33px;
  line-height: 37px;
}

h2 {
  margin: 0;
  border: 1px solid #000;
  background: #87ceeb;
  font-size: 38px;
  line-height: 44px;
  text-align: center;
}

.day p {
  margin: 33px 0;
  white-space: nowrap;
}

.day p:first-of-type {
  margin-top: 38px;
}

.day b {
  border-bottom: 1px solid #000;
}

.sky {
  display: inline-block;
  width: 75px;
  height: 75px;
}

.taskbar {
  display: grid;
  grid-template-columns: 1fr auto 1fr;
  align-items: center;
  height: 68px;
  padding-bottom: 2px;
  border-top: 2px solid #b1b1ad;
  background: linear-gradient(90deg, #dcdcda 0, #d6dfe1 5%, #dcdcda 10%, #dcdcda 22%, #dde0cf 29%, #e0e0d8 38%, #dfdfd8 80%, #dbdbdb 92%);
}

.widget {
  display: flex;
  gap: 8px;
  justify-self: start;
  margin-left: 32px;
  color: #56585a;
  text-align: left;
}

.widget > svg {
  width: 36px;
  height: 36px;
  align-self: center;
}

.degrees {
  color: #1a1a1a;
}

.apps {
  display: flex;
  gap: 6px;
}

.app {
  position: relative;
  display: flex;
  width: 60px;
  height: 60px;
  align-items: center;
  justify-content: center;
  border-radius: 6px;
}

.app svg {
  width: 36px;
  height: 36px;
}

.app.running::after {
  position: absolute;
  bottom: 1px;
  left: 26px;
  width: 9px;
  height: 5px;
  border-radius: 3px;
  background: #82827e;
  content: "";
}

.app.alert {
  background: #fde6e8;
}

.app.alert::after {
  background: #c42b1c;
}

.app.open::before {
  position: absolute;
  z-index: -1;
  inset: 2px 1px 0 4px;
  border: 1px solid #d0d0ca;
  border-radius: 6px;
  background: linear-gradient(90deg, #f0f0ec 49px, #d0d0ca 49px, #d0d0ca 50px, #f4f4f0 50px);
  content: "";
}

.app.open {
  z-index: 0;
}

.app.open::after {
  left: 18px;
  width: 24px;
  background: #0a78d4;
}

.badge {
  position: absolute;
  top: 5px;
  right: 5px;
  width: 22px;
  height: 22px;
  border-radius: 50%;
  background: #f0524f;
  color: #fff;
  font-size: 14px;
  line-height: 22px;
}

.task-search {
  display: flex;
  align-items: center;
  width: 328px;
  height: 48px;
  margin: 6px 1px 6px 3px;
  padding: 0 14px 0 15px;
  box-sizing: border-box;
  border: 1px solid #cfcfc8;
  border-bottom: 2px solid #b9b9b2;
  border-radius: 24px;
  background: #f6f7f3;
  font-size: 19px;
}

.task-search input {
  flex: 1;
  min-width: 0;
  margin-left: 14px;
}

.task-search input::placeholder {
  color: #5d5d5b;
}

.bing {
  width: 32px;
  height: 32px;
}

.tray {
  display: flex;
  align-items: center;
  justify-self: end;
  margin-right: 30px;
}

.tray .icon-button {
  width: 48px;
  height: 48px;
}

.tray .network {
  width: 84px;
  gap: 12px;
}

.clock {
  margin: 0 10px 0 16px;
  text-align: right;
}

.count {
  width: 24px;
  height: 24px;
  border-radius: 50%;
  background: #0067c0;
  color: #fff;
  font-size: 16px;
  text-align: center;
}
</style>
